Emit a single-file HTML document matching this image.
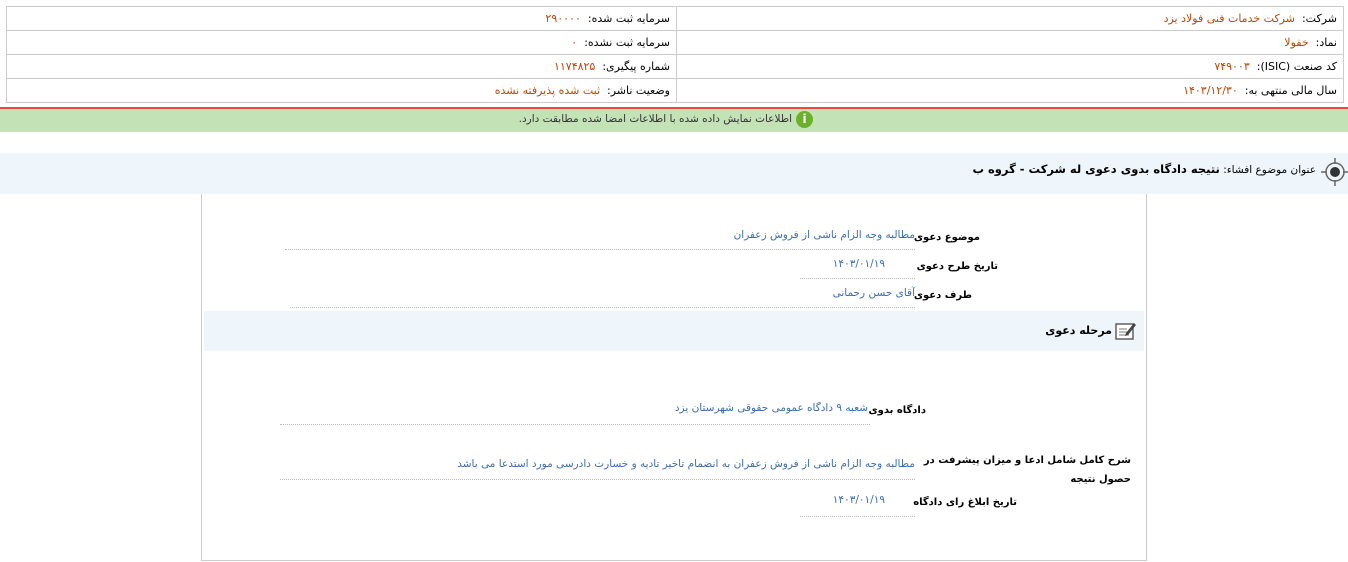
<!DOCTYPE html>
<html><head><meta charset="utf-8"><style>
*{margin:0;padding:0;box-sizing:border-box}
body{width:1348px;height:562px;background:#fff;font-family:"DejaVu Sans","Noto Sans CJK SC",sans-serif;font-size:11px;color:#000;position:relative;overflow:hidden}
.a{position:absolute;white-space:nowrap;direction:rtl}
.t{position:absolute;left:6px;top:6px;width:1338px;border:1px solid #ccc;border-collapse:collapse}
.t td{border:1px solid #ccc;height:24px;direction:rtl;padding:0 6px;font-size:11px;vertical-align:middle}
.o{color:#b5470e}
.b{color:#3d6da8;font-size:10.5px}
.dl{position:absolute;border-bottom:1px dotted #bbb;height:0}
.lb{font-weight:bold;font-size:10px}
</style></head><body>
<table class="t" dir="rtl"><tr><td style="width:667px">شرکت:&nbsp; <span class="o">شرکت خدمات فنی فولاد یزد</span></td><td>سرمایه ثبت شده:&nbsp; <span class="o">۲۹۰۰۰۰</span></td></tr>
<tr><td>نماد:&nbsp; <span class="o">خفولا</span></td><td>سرمایه ثبت نشده:&nbsp; <span class="o">۰</span></td></tr>
<tr><td>کد صنعت (ISIC):&nbsp; <span class="o">۷۴۹۰۰۳</span></td><td>شماره پیگیری:&nbsp; <span class="o">۱۱۷۴۸۲۵</span></td></tr>
<tr><td>سال مالی منتهی به:&nbsp; <span class="o">۱۴۰۳/۱۲/۳۰</span></td><td>وضعیت ناشر:&nbsp; <span class="o">ثبت شده پذیرفته نشده</span></td></tr></table>
<div style="position:absolute;left:0;top:107px;width:1348px;height:2px;background:#f04545"></div>
<div style="position:absolute;left:0;top:109px;width:1348px;height:23px;background:#c3e2b5"></div>
<div class="a" style="right:556px;top:113px;color:#333;font-size:10.5px">اطلاعات نمایش داده شده با اطلاعات امضا شده مطابقت دارد.</div>
<div style="position:absolute;left:796px;top:111px;width:17px;height:17px;border-radius:50%;background:#6bb02a;color:#fff;font-weight:bold;text-align:center;line-height:17px;font-size:12px">i</div>
<div style="position:absolute;left:0;top:153px;width:1348px;height:41px;background:#eef5fb"></div>
<svg style="position:absolute;left:1320px;top:157px" width="30" height="30"><circle cx="15" cy="15" r="9" fill="none" stroke="#666" stroke-width="1.5"/><circle cx="15" cy="15" r="5" fill="#333"/><path d="M15 1v6M15 23v6M1 15h6M23 15h6" stroke="#666" stroke-width="1.5"/></svg>
<div class="a" style="right:32px;top:162px;font-size:10.5px">عنوان موضوع افشاء: <b style="font-size:11.5px">نتیجه دادگاه بدوی دعوی له شرکت - گروه ب</b></div>
<div style="position:absolute;left:201px;top:194px;width:946px;height:367px;border:1px solid #ccc;border-top:none"></div>
<div class="a lb" style="right:368px;top:232px">موضوع دعوی</div>
<div class="a b" style="right:433px;top:229px">مطالبه وجه الزام ناشی از فروش زعفران</div>
<div class="dl" style="left:285px;width:630px;top:249px"></div>
<div class="a lb" style="right:350px;top:261px">تاریخ طرح دعوی</div>
<div class="a b" style="right:463px;top:258px">۱۴۰۳/۰۱/۱۹</div>
<div class="dl" style="left:800px;width:115px;top:278px"></div>
<div class="a lb" style="right:376px;top:290px">طرف دعوی</div>
<div class="a b" style="right:433px;top:287px">آقای حسن رحمانی</div>
<div class="dl" style="left:290px;width:625px;top:307px"></div>
<div style="position:absolute;left:204px;top:311px;width:940px;height:40px;background:#eef5fb"></div>
<svg style="position:absolute;left:1114px;top:320px" width="24" height="22"><rect x="2" y="4" width="17" height="15" fill="#fff" stroke="#555" stroke-width="1.4"/><path d="M5 9h8M5 12h8M5 15h10" stroke="#777"/><path d="M12 13l8-10 2 2-8 10-3 1z" fill="#444"/></svg>
<div class="a lb" style="right:236px;top:324px;font-size:11px">مرحله دعوی</div>
<div class="a lb" style="right:422px;top:405px">دادگاه بدوی</div>
<div class="a b" style="right:480px;top:402px">شعبه ۹ دادگاه عمومی حقوقی شهرستان یزد</div>
<div class="dl" style="left:280px;width:590px;top:424px"></div>
<div class="a lb" style="right:217px;top:451px;text-align:right;line-height:19px;white-space:normal;width:215px">شرح کامل شامل ادعا و میزان پیشرفت در حصول نتیجه</div>
<div class="a b" style="right:433px;top:458px">مطالبه وجه الزام ناشی از فروش زعفران به انضمام تاخیر تادیه و خسارت دادرسی مورد استدعا می باشد</div>
<div class="dl" style="left:280px;width:635px;top:479px"></div>
<div class="a lb" style="right:331px;top:497px">تاریخ ابلاغ رای دادگاه</div>
<div class="a b" style="right:463px;top:494px">۱۴۰۳/۰۱/۱۹</div>
<div class="dl" style="left:800px;width:115px;top:516px"></div>
</body></html>
